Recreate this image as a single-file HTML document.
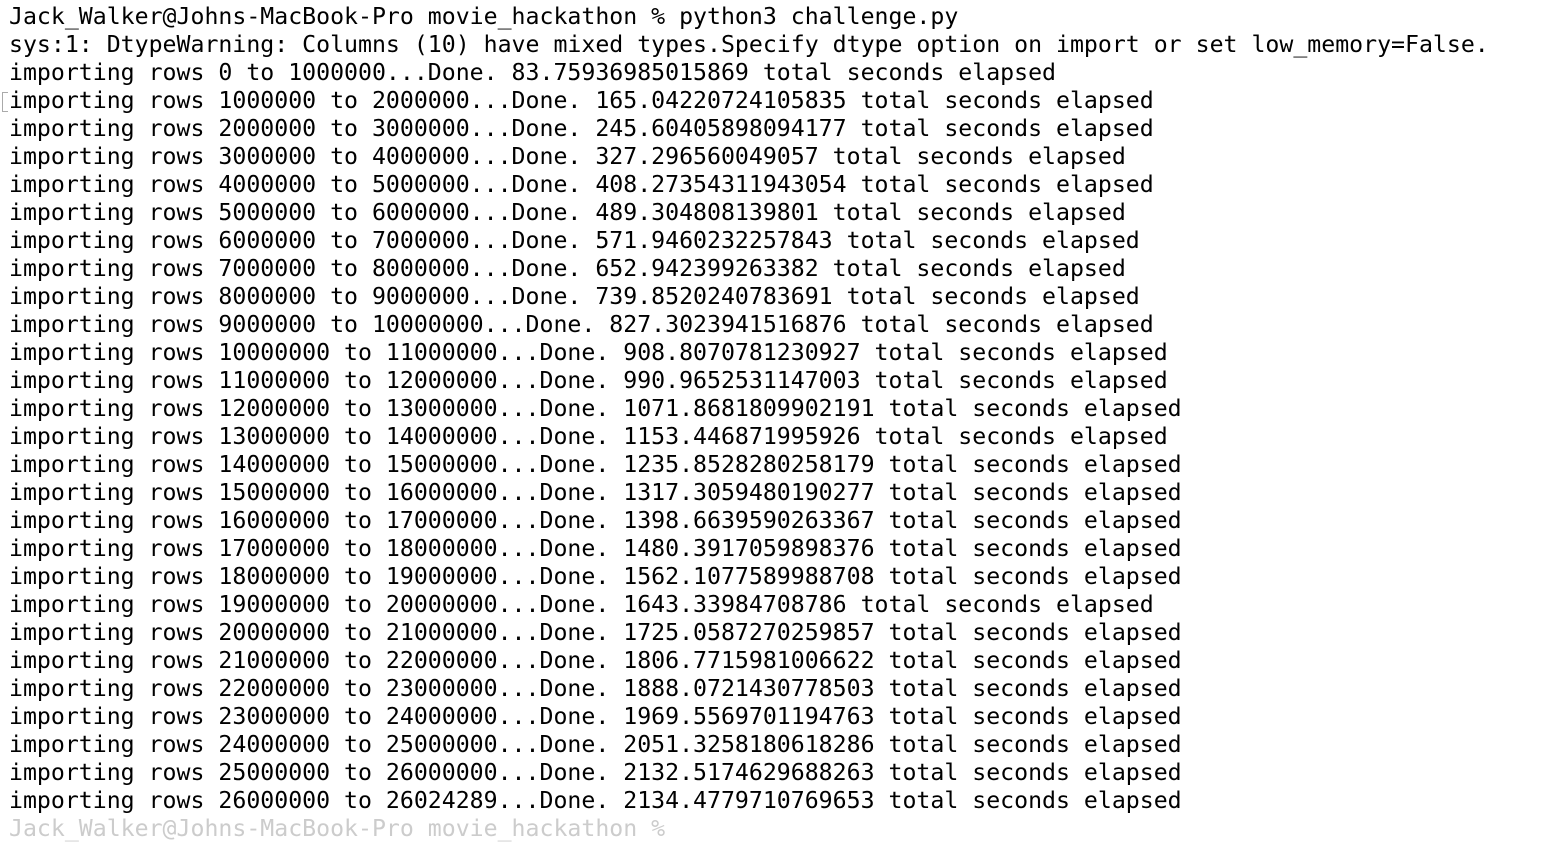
<!DOCTYPE html>
<html><head><meta charset="utf-8"><style>
html,body{margin:0;padding:0;background:#fff;width:1546px;height:820px;overflow:hidden}
pre{margin:0;position:absolute;left:9px;top:3px;font-family:"DejaVu Sans Mono","Liberation Mono",monospace;font-size:23.2px;line-height:28px;color:#000;white-space:pre}
.cur{position:absolute;left:2px;top:92px;width:5px;height:18px;border:1px solid #aaa;border-right:none}
.faint{color:#ccc}
</style></head><body>
<div class="cur"></div>
<pre>Jack_Walker@Johns-MacBook-Pro movie_hackathon % python3 challenge.py
sys:1: DtypeWarning: Columns (10) have mixed types.Specify dtype option on import or set low_memory=False.
importing rows 0 to 1000000...Done. 83.75936985015869 total seconds elapsed
importing rows 1000000 to 2000000...Done. 165.04220724105835 total seconds elapsed
importing rows 2000000 to 3000000...Done. 245.60405898094177 total seconds elapsed
importing rows 3000000 to 4000000...Done. 327.296560049057 total seconds elapsed
importing rows 4000000 to 5000000...Done. 408.27354311943054 total seconds elapsed
importing rows 5000000 to 6000000...Done. 489.304808139801 total seconds elapsed
importing rows 6000000 to 7000000...Done. 571.9460232257843 total seconds elapsed
importing rows 7000000 to 8000000...Done. 652.942399263382 total seconds elapsed
importing rows 8000000 to 9000000...Done. 739.8520240783691 total seconds elapsed
importing rows 9000000 to 10000000...Done. 827.3023941516876 total seconds elapsed
importing rows 10000000 to 11000000...Done. 908.8070781230927 total seconds elapsed
importing rows 11000000 to 12000000...Done. 990.9652531147003 total seconds elapsed
importing rows 12000000 to 13000000...Done. 1071.8681809902191 total seconds elapsed
importing rows 13000000 to 14000000...Done. 1153.446871995926 total seconds elapsed
importing rows 14000000 to 15000000...Done. 1235.8528280258179 total seconds elapsed
importing rows 15000000 to 16000000...Done. 1317.3059480190277 total seconds elapsed
importing rows 16000000 to 17000000...Done. 1398.6639590263367 total seconds elapsed
importing rows 17000000 to 18000000...Done. 1480.3917059898376 total seconds elapsed
importing rows 18000000 to 19000000...Done. 1562.1077589988708 total seconds elapsed
importing rows 19000000 to 20000000...Done. 1643.33984708786 total seconds elapsed
importing rows 20000000 to 21000000...Done. 1725.0587270259857 total seconds elapsed
importing rows 21000000 to 22000000...Done. 1806.7715981006622 total seconds elapsed
importing rows 22000000 to 23000000...Done. 1888.0721430778503 total seconds elapsed
importing rows 23000000 to 24000000...Done. 1969.5569701194763 total seconds elapsed
importing rows 24000000 to 25000000...Done. 2051.3258180618286 total seconds elapsed
importing rows 25000000 to 26000000...Done. 2132.5174629688263 total seconds elapsed
importing rows 26000000 to 26024289...Done. 2134.4779710769653 total seconds elapsed
<span class="faint">Jack_Walker@Johns-MacBook-Pro movie_hackathon %</span></pre>
</body></html>
